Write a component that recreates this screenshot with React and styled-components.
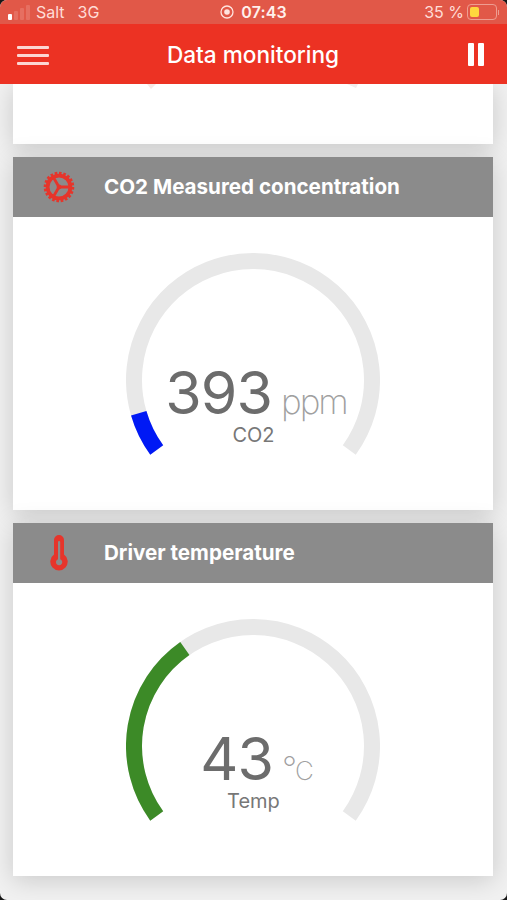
import React from "react";
import styled, { createGlobalStyle } from "styled-components";

const GlobalStyle = createGlobalStyle`
  * {
    box-sizing: border-box;
  }
  body {
    margin: 0;
    background: #161616;
    font-family: Inter, "Liberation Sans", sans-serif;
  }
`;

const Screen = styled.div`
  display: flex;
  flex-direction: column;
  height: 900px;
  overflow: hidden;
  border-radius: 7px;
  background: #f1f1f1;
`;
const StatusBar = styled.div`
  display: grid;
  grid-template-columns: 1fr auto 1fr;
  align-items: center;
  flex: none;
  height: 24px;
  padding: 0 8px;
  background: #e15848;
  color: #ffdcd6;
  font-size: 16px;
`;
const StatusGroup = styled.div`
  display: flex;
  align-items: center;
  justify-content: ${(props) => props.$align || "flex-start"};
  gap: ${(props) => props.$gap};
`;
const Signal = styled.div`
  display: flex;
  align-items: flex-end;
  gap: 2px;
  height: 15px;
`;
const Bar = styled.span`
  width: 4px;
  height: ${(props) => props.$height}px;
  border-radius: 1px;
  background: ${(props) => (props.$on ? "#fff" : "#e66f61")};
`;
const Carrier = styled.span`
  padding-left: ${(props) => props.$indent || "0"};
  white-space: nowrap;
`;
const Time = styled.span`
  color: #fff0ed;
  font-weight: 600;
  letter-spacing: 0.1px;
`;
const Battery = styled.span`
  width: 30px;
  height: 16px;
  margin-left: 2px;
  padding: 2px;
  border: 1px solid #ee9d91;
  border-radius: 4px;
`;
const Charge = styled.span`
  display: block;
  width: 9px;
  height: 10px;
  border-radius: 2px;
  background: #ffd73e;
`;
const BatteryTip = styled.span`
  width: 1px;
  height: 5px;
  background: #ee9d91;
`;
const NavBar = styled.header`
  display: grid;
  grid-template-columns: 32px 1fr 32px;
  align-items: center;
  flex: none;
  height: 60px;
  padding: 0 23px 0 17px;
  background: #ec3223;
`;
const MenuButton = styled.button`
  display: flex;
  flex-direction: column;
  gap: 5px;
  width: 32px;
  padding: 2px 0 0;
  border: 0;
  background: none;
`;
const MenuLine = styled.span`
  height: 3px;
  border-radius: 1px;
  background: #fcd6d2;
`;
const Title = styled.h1`
  margin: 0;
  padding: 2px 0 0 5px;
  color: #fff;
  font-size: 22.6px;
  font-weight: 500;
  line-height: 28px;
  text-align: center;
  white-space: nowrap;
`;
const PauseButton = styled.button`
  display: flex;
  justify-content: flex-end;
  gap: 4px;
  padding: 0;
  border: 0;
  background: none;
`;
const PauseBar = styled.span`
  width: 6px;
  height: 23px;
  border-radius: 1px;
  background: #fff;
`;
const Content = styled.main`
  display: flex;
  flex-direction: column;
  flex: 1;
  gap: 13px;
  padding: 0 14px 24px 13px;
  overflow: hidden;
`;
const Card = styled.section`
  flex: none;
  height: ${(props) => props.$height}px;
  background: #fff;
  box-shadow: 0 4px 24px rgba(0, 0, 0, 0.17);
`;
const CardHeader = styled.div`
  display: flex;
  align-items: center;
  height: 60px;
  background: #8b8b8b;
`;
const IconSlot = styled.div`
  display: flex;
  justify-content: center;
  width: 91px;
  color: #e6352b;
`;
const CardTitle = styled.h2`
  margin: 0;
  padding-bottom: 2px;
  color: #fff;
  font-size: 20.6px;
  font-weight: 700;
  white-space: nowrap;
`;
const GaugeBox = styled.div`
  display: grid;
  justify-items: center;
  padding-top: 36px;
`;
const Dial = styled.svg`
  grid-area: 1 / 1;
  display: block;
`;
const GaugeTips = styled.svg`
  display: block;
`;
const Readout = styled.div`
  grid-area: 1 / 1;
  display: flex;
  flex-direction: column;
  align-items: center;
  padding-top: 105px;
  color: #6c6c6c;
`;
const ValueRow = styled.div`
  display: flex;
  align-items: baseline;
  height: 64px;
  line-height: 70px;
  padding-left: 6px;
`;
const Value = styled.span`
  margin-right: 9px;
  font-size: 59px;
  letter-spacing: -0.9px;
`;
const Unit = styled.span`
  color: #a0a0a0;
  font-size: ${(props) => props.$size || 35}px;
  font-weight: 200;
  letter-spacing: -2px;
`;
const Label = styled.div`
  padding-left: 1px;
  color: #777;
  font-size: 20px;
  line-height: 27px;
`;

const SWEEP = 252;
const START = 144;

const point = (angle) => {
  const rad = (angle * Math.PI) / 180;
  return `${127 + 119 * Math.cos(rad)} ${127 + 119 * Math.sin(rad)}`;
};

const arc = (from, to) =>
  `M${point(from)} A119 119 0 ${to - from > 180 ? 1 : 0} 1 ${point(to)}`;

const Gauge = ({ value, max, unit, label, color }) => (
  <GaugeBox>
    <Dial width="254" height="206" viewBox="0 0 254 206" fill="none">
      <path d={arc(START, START + SWEEP)} stroke="#e8e8e8" strokeWidth="16" />
      <path
        d={arc(START, START + (SWEEP * value) / max)}
        stroke={color}
        strokeWidth="16"
      />
    </Dial>
    <Readout>
      <ValueRow>
        <Value>{value}</Value>
        {unit}
      </ValueRow>
      <Label>{label}</Label>
    </Readout>
  </GaugeBox>
);

// 20 teeth around the rim, three spokes to the hub
const Gear = () => (
  <svg width="32" height="32" viewBox="-16 -16 32 32" fill="none" stroke="currentColor">
    <circle r="11.4" strokeWidth="3.8" />
    <circle r="13.9" strokeWidth="2.8" pathLength="40" strokeDasharray="1.2 0.8" />
    <path d="M0 0H11M0 0L-5.5 -9.5M0 0L-5.5 9.5" strokeWidth="2.8" />
    <circle r="2.4" fill="currentColor" stroke="none" />
  </svg>
);

const Thermometer = () => (
  <svg width="18" height="36" viewBox="0 0 18 36">
    <path
      fill="currentColor"
      fillRule="evenodd"
      d="M4 5a5 5 0 0 1 10 0v14.6a8.7 8.7 0 1 1-10 0zM8 7v17.2a3.1 3.1 0 1 0 2.2 0V7a1.1 1.1 0 0 0-2.2 0z"
    />
  </svg>
);

const App = () => {
  return (
    <Screen>
      <GlobalStyle />
      <StatusBar>
        <StatusGroup $gap="6px">
          <Signal>
            <Bar $height={6} $on />
            <Bar $height={9} />
            <Bar $height={12} />
            <Bar $height={15} />
          </Signal>
          <Carrier>Salt</Carrier>
          <Carrier $indent="7px">3G</Carrier>
        </StatusGroup>
        <StatusGroup $gap="7px">
          <svg width="14" height="14" viewBox="0 0 14 14">
            <circle cx="7" cy="7" r="6" fill="none" stroke="#ffe4df" strokeWidth="1.3" />
            <circle cx="7" cy="7" r="2.8" fill="#ffe4df" />
          </svg>
          <Time>07:43</Time>
        </StatusGroup>
        <StatusGroup $gap="1px" $align="flex-end">
          <Carrier>35 %</Carrier>
          <Battery>
            <Charge />
          </Battery>
          <BatteryTip />
        </StatusGroup>
      </StatusBar>
      <NavBar>
        <MenuButton aria-label="Menu">
          <MenuLine />
          <MenuLine />
          <MenuLine />
        </MenuButton>
        <Title>Data monitoring</Title>
        <PauseButton aria-label="Pause">
          <PauseBar />
          <PauseBar />
        </PauseButton>
      </NavBar>
      <Content>
        <Card $height={60}>
          <GaugeTips width="480" height="6" viewBox="0 0 480 6">
            <path d="M134 0h9l-5 5z" fill="#f6e9e6" />
            <path d="M334 0h11l-2 4z" fill="#f1ecec" />
          </GaugeTips>
        </Card>
        <Card $height={353}>
          <CardHeader>
            <IconSlot>
              <Gear />
            </IconSlot>
            <CardTitle>CO2 Measured concentration</CardTitle>
          </CardHeader>
          <Gauge
            value={393}
            max={5000}
            unit={<Unit>ppm</Unit>}
            label="CO2"
            color="#0019f5"
          />
        </Card>
        <Card $height={353}>
          <CardHeader>
            <IconSlot>
              <Thermometer />
            </IconSlot>
            <CardTitle>Driver temperature</CardTitle>
          </CardHeader>
          <Gauge
            value={43}
            max={119}
            unit={
              <>
                <Unit $size={33}>°</Unit>
                <Unit $size={26}>C</Unit>
              </>
            }
            label="Temp"
            color="#3c8a27"
          />
        </Card>
      </Content>
    </Screen>
  );
};

export default App;
